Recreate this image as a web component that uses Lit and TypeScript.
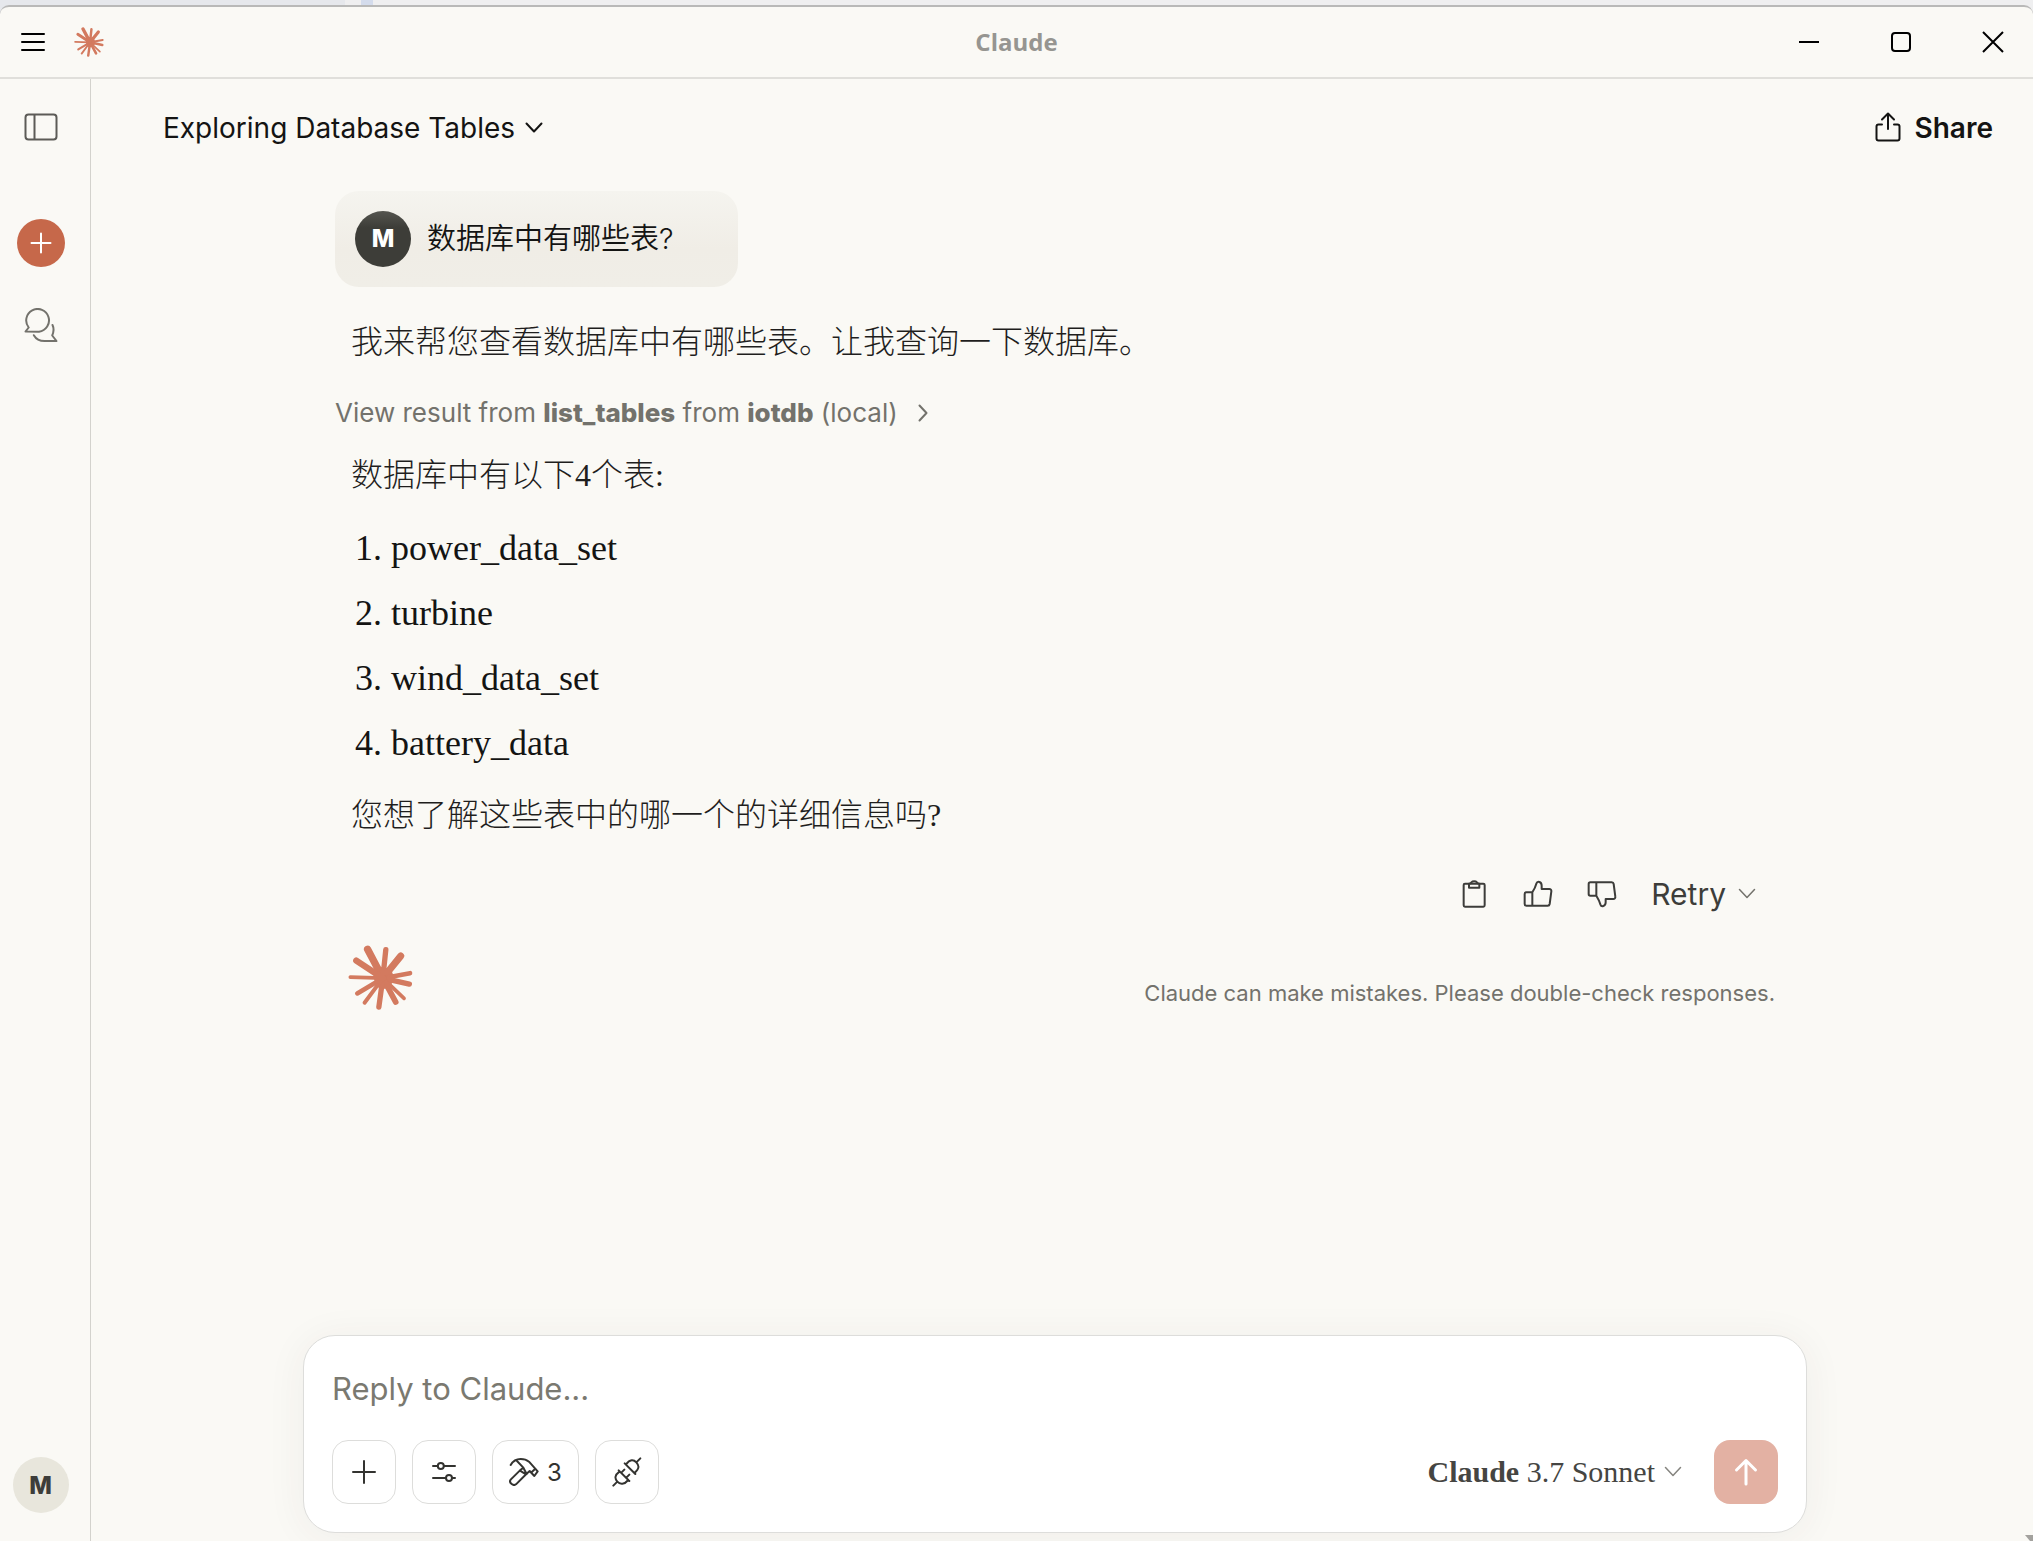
import { LitElement, html, css, svg } from "lit";
import { customElement } from "lit/decorators.js";

const chevron = html`<svg width="18" height="12" viewBox="0 0 18 12" aria-hidden="true">
  <path d="M1.5 1.5 9 9.5l7.5-8" />
</svg>`;

const thumb = html`<svg width="30" height="28" viewBox="207 23 90 84" stroke-width="6" aria-hidden="true">
  <path d="M235 60h-18a5 5 0 0 0-5 5v30a5 5 0 0 0 5 5h64a6 6 0 0 0 6-5l5-38a6 6 0 0 0-6-7h-23V40c0-13-13-15-16-6-3 11-7 18-12 26ZM235 60v40" />
</svg>`;

@customElement("claude-mark")
class ClaudeMark extends LitElement {
  static styles = css`
    :host { display: block; }
    svg { display: block; width: 100%; height: 100%; }
    .ray { stroke: #d37a5f; stroke-linecap: round; fill: none; }
    .core { fill: #d37a5f; }
  `;
  render() {
    const rays: [number, number, number][] = [
      [144, 85, 22], [199, 86, 16], [244, 105, 21], [272, 157, 14], [270, 190, 16], [254, 233, 11],
      [229, 244, 17], [178, 259, 16], [135, 246, 12], [113, 218, 14], [92, 169, 11], [110, 119, 19],
    ];
    return html`<svg viewBox="85 72 196 196" aria-hidden="true">
      <path class="core" d="M160 146 186 138 214 144 222 164 220 184 208 200 188 206 168 196 164 176Z" />
      ${rays.map(([x, y, w]) => svg`<path class="ray" stroke-width=${w} d="M190 172 ${x} ${y}" />`)}
    </svg>`;
  }
}

@customElement("app-root")
class AppRoot extends LitElement {
  static styles = css`
    :host {
      display: block;
      --ink: #141413;
      --soft: #3d3d3a;
      --muted: #73726c;
      --paper: #faf9f5;
      --sans: Inter, "Noto Sans CJK SC", sans-serif;
      --serif: "Liberation Serif", "Noto Sans CJK SC", serif;
      font-family: var(--sans);
      color: var(--ink);
    }
    * { box-sizing: border-box; }
    svg { display: block; flex: none; fill: none; stroke: currentColor; stroke-linecap: round; stroke-linejoin: round; }
    button { display: flex; align-items: center; justify-content: center; padding: 0; border: 0; background: none; font: inherit; color: inherit; cursor: pointer; }
    p, ol { margin: 0; }

    .desktop {
      display: flex; flex-direction: column; height: 100vh; padding-top: 5px; overflow: hidden;
      background: linear-gradient(90deg, #e6e8ec 345px, #efeff0 345px, #efeff0 361px, #d4dcec 361px, #d4dcec 373px, #efeff0 373px);
    }
    .window {
      display: flex; flex-direction: column; flex: 1; min-height: 0;
      border-top: 2px solid #b9b9b8; border-radius: 9px 9px 0 0; background: var(--paper); overflow: hidden;
    }

    .titlebar {
      display: grid; grid-template-columns: 1fr auto 1fr; align-items: center; flex: none;
      height: 72px; padding: 0 29px 1px 21px; border-bottom: 2px solid #e0dfdb;
    }
    .tools { display: flex; align-items: center; gap: 29px; }
    .tools svg { color: #000; stroke-width: 2; }
    .tools claude-mark { width: 30px; height: 30px; }
    .name { padding-left: 8px; font: 700 24px/34px "Open Sans", sans-serif; color: #969591; }
    .controls { display: flex; justify-content: flex-end; gap: 70px; }
    .controls svg { color: #000; stroke-width: 2; stroke-linecap: butt; }

    .body { display: flex; flex: 1; min-height: 0; }
    .rail {
      display: flex; flex-direction: column; align-items: center; flex: none; width: 91px;
      padding: 34px 9px 28px 0; border-right: 1px solid #d3d2cd;
    }
    .rail .panel { margin-bottom: 78px; color: #5c5b57; }
    .rail .new { width: 48px; height: 48px; margin-bottom: 41px; border-radius: 50%; background: #c6684a; color: #fff; }
    .rail .chats { color: var(--muted); }
    .avatar {
      display: flex; align-items: center; justify-content: center; flex: none;
      width: 56px; height: 56px; border-radius: 50%; font-weight: 800; font-size: 24px;
    }
    .rail .avatar { margin-top: auto; background: #e8e6dc; color: var(--soft); }

    .main { display: flex; flex-direction: column; flex: 1; min-width: 0; }
    .topbar { display: flex; align-items: center; justify-content: space-between; flex: none; height: 98px; padding: 0 40px 0 72px; }
    .topic { gap: 10px; font-size: 28px; }
    .topic svg { stroke-width: 2; }
    .share { gap: 14px; font-size: 28px; font-weight: 600; }
    .share svg { stroke-width: 2; }

    .thread { display: flex; flex-direction: column; flex: 1; width: 100%; padding: 14px 30px 0 16px; min-height: 0; }
    .column { width: 100%; max-width: 1440px; margin: 0 auto; }
    .bubble {
      display: flex; align-items: center; gap: 16px; width: fit-content; padding: 20px 64px 20px 20px; border-radius: 24px;
      background: linear-gradient(#f5f4ef, #f0ede6 60%, #f0eee7); font-size: 29px; line-height: 56px;
    }
    .bubble .avatar { background: linear-gradient(#55554f, #3d3d38 30%); color: #fff; }
    .says { font-weight: 350; }
    .answer { padding: 0 16px; font-family: var(--serif); font-weight: 300; font-size: 32px; line-height: 48px; color: #1f1e1d; }
    .first { margin-top: 31px; }
    .result { gap: 20px; margin: 29px 0 20px; font-size: 26px; line-height: 36px; color: var(--muted); }
    .result b { font-weight: 800; }
    .tables { display: grid; gap: 17px; margin: 25px 0 24px; padding-left: 40px; font-size: 36px; font-weight: 400; color: var(--ink); }
    .tables li::marker { content: counter(list-item) ". "; }

    .actions { display: flex; justify-content: flex-end; align-items: center; gap: 34px; margin-top: 35px; padding-right: 19px; color: var(--soft); }
    .down { transform: scaleY(-1); }
    .retry { gap: 12px; font-size: 30px; line-height: 40px; }
    .retry svg { stroke-width: 1.5; color: var(--muted); }
    .closing { display: flex; justify-content: space-between; align-items: flex-end; margin-top: 31px; padding-left: 13px; }
    .closing claude-mark { width: 65px; height: 65px; }
    .closing p { font-size: 22px; line-height: 34px; color: var(--muted); }

    .dock { flex: none; padding: 0 30px 8px 16px; }
    .composer {
      width: 100%; max-width: 1504px; margin: 0 auto; padding: 30px 28px 28px; border: 1px solid #dddddb;
      border-radius: 32px; background: #fff; box-shadow: 0 4px 40px rgba(60, 58, 45, 0.06);
    }
    .reply {
      display: block; width: 100%; height: 46px; padding: 0; border: 0; outline: 0; resize: none; background: none;
      font: 400 31px/46px var(--sans); color: var(--ink); overflow: hidden;
    }
    .reply::placeholder { color: #7a7970; opacity: 1; }
    .bar { display: flex; align-items: center; gap: 16px; margin-top: 28px; color: #333330; }
    .chip { gap: 8px; width: 64px; height: 64px; border: 1px solid #dddddb; border-radius: 16px; font-size: 24px; }
    .chip svg { stroke-width: 2; }
    .chip .art { stroke-width: 6; }
    .wide { width: 87px; }
    .model { gap: 9px; margin-left: auto; margin-right: 16px; font: 400 30px/40px var(--serif); color: #454542; }
    .model b { font-weight: 700; }
    .model svg { stroke-width: 1.5; color: #85847f; }
    .send { width: 64px; height: 64px; border-radius: 16px; background: #e3b1a3; color: #fff; }
    .corner { position: absolute; right: 0; bottom: 0; stroke: none; fill: #a3a29e; }
  `;

  render() {
    const tables = ["power_data_set", "turbine", "wind_data_set", "battery_data"];
    return html`<div class="desktop"><div class="window">
      <header class="titlebar">
        <div class="tools">
          <button aria-label="Menu"><svg width="24" height="22" viewBox="0 0 24 22"><path d="M1 3h22M1 11h22M1 19h22" /></svg></button>
          <claude-mark></claude-mark>
        </div>
        <span class="name">Claude</span>
        <div class="controls">
          <button aria-label="Minimize"><svg width="22" height="22" viewBox="0 0 22 22"><path d="M1 11h20" /></svg></button>
          <button aria-label="Maximize"><svg width="22" height="22" viewBox="0 0 22 22"><rect x="2" y="2" width="18" height="18" rx="3" /></svg></button>
          <button aria-label="Close"><svg width="22" height="22" viewBox="0 0 22 22"><path d="m1 1 20 20M21 1 1 21" /></svg></button>
        </div>
      </header>
      <div class="body">
        <nav class="rail" aria-label="Sidebar">
          <button class="panel" aria-label="Open sidebar"><svg width="34" height="28" viewBox="0 0 34 28" stroke-width="2"><rect x="1.5" y="1.5" width="31" height="25" rx="3" /><path d="M10.5 2v24" /></svg></button>
          <button class="new" aria-label="New chat"><svg width="22" height="22" viewBox="0 0 22 22" stroke-width="2"><path d="M11 1.5v19M1.5 11h19" /></svg></button>
          <button class="chats" aria-label="Chats"><svg width="34" height="34" viewBox="0 0 34 34" stroke-width="2"><path d="M1.5 23.5 4.7 19.5A11.4 11.4 0 1 1 15 23.7Z" /><path d="M28.5 17c1.800 3.700 1.200 7-.3 10.500l4.300 5.500H20.500c-5 0-8.500-2-10.700-5.800" /></svg></button>
          <button class="avatar" aria-label="Account">M</button>
        </nav>
        <main class="main">
          <div class="topbar">
            <button class="topic">Exploring Database Tables ${chevron}</button>
            <button class="share"><svg width="26" height="32" viewBox="0 0 26 32"><path d="M7 12.5H3.500a2 2 0 0 0-2 2v12a2 2 0 0 0 2 2h19a2 2 0 0 0 2-2v-12a2 2 0 0 0-2-2H19M13 17V1.500M7 7.500l6-6 6 6" /></svg>Share</button>
          </div>
          <section class="thread"><div class="column">
            <div class="bubble"><span class="avatar">M</span><span class="says">数据库中有哪些表?</span></div>
            <p class="answer first">我来帮您查看数据库中有哪些表。让我查询一下数据库。</p>
            <button class="result"><span>View result from <b>list_tables</b> from <b>iotdb</b> (local)</span>
              <svg width="10" height="18" viewBox="0 0 10 18" stroke-width="2"><path d="m1.500 1.500 7 7.500-7 7.500" /></svg></button>
            <div class="answer">
              <p>数据库中有以下4个表:</p>
              <ol class="tables">${tables.map((t) => html`<li>${t}</li>`)}</ol>
              <p>您想了解这些表中的哪一个的详细信息吗?</p>
            </div>
            <div class="actions">
              <button aria-label="Copy"><svg width="30" height="30" viewBox="15 22 90 90" stroke-width="6"><rect x="29" y="36" width="63" height="69" rx="4" /><path d="M45 36v12h31V36c-4 0-6-2-7-4-4-4-13-4-17 0-1 2-3 4-7 4Z" /></svg></button>
              <button aria-label="Good response">${thumb}</button>
              <button class="down" aria-label="Bad response">${thumb}</button>
              <button class="retry">Retry ${chevron}</button>
            </div>
            <div class="closing"><claude-mark></claude-mark><p>Claude can make mistakes. Please double-check responses.</p></div>
          </div></section>
          <div class="dock"><form class="composer">
            <textarea class="reply" rows="1" aria-label="Reply to Claude" placeholder="Reply to Claude..."></textarea>
            <div class="bar">
              <button type="button" class="chip" aria-label="Add content"><svg width="26" height="26" viewBox="0 0 26 26"><path d="M13 2v22M2 13h22" /></svg></button>
              <button type="button" class="chip" aria-label="Settings"><svg width="26" height="22" viewBox="0 0 26 22"><path d="M2 5h4.500M13 5h11M2 17h12.500M21.500 17H24" /><circle cx="9.8" cy="5" r="3" /><circle cx="18" cy="17" r="3" /></svg></button>
              <button type="button" class="chip wide" aria-label="3 tools"><svg class="art" width="30" height="28" viewBox="17 22 90 84"><path d="M22 43C29 31 39 25 52 25c10 0 19 3 25 8l26 29-10 14-14-15-10 9-31 31c-5 4-8 3-13-1s-7-8-3-13l28-28 10-8-19-20M50 60l18 11M60 51l10 19M96 54 83 66" /></svg>3</button>
              <button type="button" class="chip" aria-label="Connections"><svg class="art" width="30" height="30" viewBox="322 21 90 90"><path d="m326 107 12-12M342 61l32 32M345 64c-16 12-15 22-7 31s21 9 33-5M350 68l9-9M365 83l9-9M360 40l32 32M364 43c12-16 23-15 31-6s11 18-6 32M395 37l12-12" /></svg></button>
              <button type="button" class="model"><span><b>Claude</b> 3.7 Sonnet</span>${chevron}</button>
              <button type="submit" class="send" aria-label="Send"><svg width="24" height="28" viewBox="0 0 24 28" stroke-width="3"><path d="M12 26V2.500M2.500 12 12 2.500l9.500 9.500" /></svg></button>
            </div>
          </form></div>
        </main>
      </div>
      <svg class="corner" width="8" height="6" viewBox="0 0 8 6" aria-hidden="true"><path d="M0 0h8v6H5Z" /></svg>
    </div></div>`;
  }
}
